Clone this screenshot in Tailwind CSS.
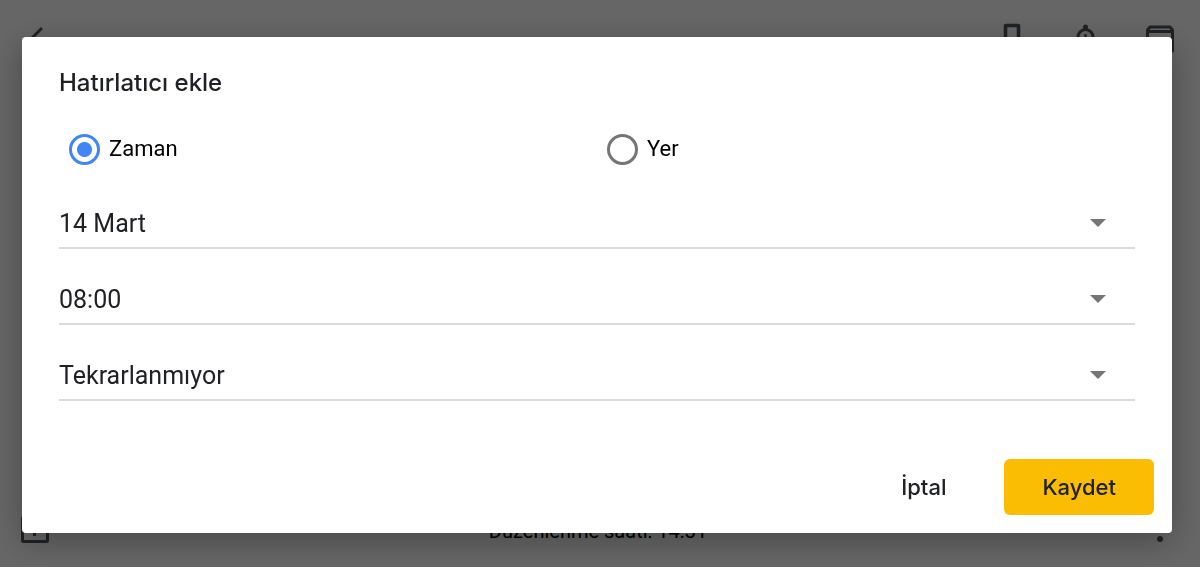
<!DOCTYPE html>
<html lang="tr">
<head>
  <meta charset="UTF-8">
  <meta name="viewport" content="width=device-width, initial-scale=1.0">
  <title>Hatırlatıcı ekle</title>
  <script src="https://cdn.jsdelivr.net/npm/@tailwindcss/browser@4"></script>
</head>
<body class="bg-white font-['Roboto',sans-serif] text-[#202124]">
  <!-- Note editor behind the dialog -->
  <div class="min-h-screen flex flex-col justify-between text-[#50545a]">
    <header class="flex items-center justify-between pt-5 pl-5 pr-6">
      <button type="button" aria-label="Geri">
        <svg class="w-9 h-9" viewBox="0 0 36 36" fill="none" stroke="currentColor" stroke-width="3">
          <path d="M22 8L7 23L18 34M7 23H34"/>
        </svg>
      </button>
      <div class="flex items-center gap-[37px]">
        <button type="button" aria-label="Sabitle">
          <svg class="w-9 h-9" viewBox="0 0 36 36" fill="none" stroke="currentColor" stroke-width="3.500" stroke-linejoin="round">
            <path d="M11.500 20V5.500H24.500V20L28.500 26H7.500ZM18 26V35"/>
          </svg>
        </button>
        <button type="button" aria-label="Hatırlatıcı">
          <svg class="w-9 h-9" viewBox="0 0 36 36" fill="none" stroke="currentColor" stroke-width="3">
            <path d="M11 28V17a7.500 7.500 0 0 1 15 0V28M7 28H30M18.500 18V24"/>
            <circle cx="18.500" cy="7" r="2.500" fill="currentColor" stroke="none"/>
            <circle cx="18.500" cy="15.500" r="1.500" fill="currentColor" stroke="none"/>
          </svg>
        </button>
        <button type="button" aria-label="Arşivle">
          <svg class="w-9 h-9" viewBox="0 0 36 36" fill="none" stroke="currentColor" stroke-width="3" stroke-linejoin="round">
            <path d="M7.500 31V10L10 7H30L32.500 10V31ZM8 11.500H32M20 20V26M15 21L20 26L25 21"/>
          </svg>
        </button>
      </div>
    </header>
    <footer class="flex items-center justify-between pl-5 pr-6 pb-5">
      <button type="button" aria-label="Ekle">
        <svg class="w-8 h-8" viewBox="0 0 32 32" fill="none" stroke="currentColor" stroke-width="3" stroke-linejoin="round">
          <rect x="2.500" y="2.500" width="25" height="24" rx="1"/>
          <path d="M14.500 7V21M8 14H21"/>
        </svg>
      </button>
      <p class="text-xl text-black">Düzenlenme saati: 14:31</p>
      <button type="button" aria-label="Diğer">
        <svg class="w-8 h-8" viewBox="0 0 32 32" fill="currentColor">
          <circle cx="16" cy="4" r="3"/>
          <circle cx="16" cy="14" r="3"/>
          <circle cx="16" cy="24" r="3"/>
        </svg>
      </button>
    </footer>
  </div>

  <!-- Dialog -->
  <div class="fixed inset-0 flex items-center bg-black/60 pl-[22px] pr-7 pt-[3px]">
    <form role="dialog" aria-labelledby="dialog-title" class="w-full rounded bg-white pt-7 pb-[18px] shadow-[0_8px_32px_rgba(0,0,0,0.3)]">
      <div class="px-[37px]">
        <h1 id="dialog-title" class="font-['Inter',sans-serif] text-2xl leading-9 font-medium">Hatırlatıcı ekle</h1>

        <div class="grid grid-cols-2 pt-8 text-[22px] leading-8 text-black">
          <label class="flex items-center gap-[9px] pl-[10px]">
            <input type="radio" name="type" value="time" checked class="appearance-none size-[31px] rounded-full border-3 border-[#757575] checked:border-[#4285f4] checked:bg-[radial-gradient(circle,#4285f4_7px,transparent_8px)]">
            Zaman
          </label>
          <label class="flex items-center gap-[9px] pl-[10px]">
            <input type="radio" name="type" value="place" class="appearance-none size-[31px] rounded-full border-3 border-[#757575] checked:border-[#4285f4] checked:bg-[radial-gradient(circle,#4285f4_7px,transparent_8px)]">
            Yer
          </label>
        </div>

        <div class="flex flex-col gap-6 pt-8 text-[25px]">
          <div class="relative">
            <select aria-label="Tarih" class="block w-full h-13 pt-1 appearance-none border-b-2 border-[#dcdcdc] bg-transparent">
              <option>14 Mart</option>
            </select>
            <svg class="absolute right-[29px] top-[22px] w-4 h-2 pointer-events-none" viewBox="0 0 16 8" fill="#757575"><path d="M0 0H16L8 8Z"/></svg>
          </div>
          <div class="relative">
            <select aria-label="Saat" class="block w-full h-13 pt-1 appearance-none border-b-2 border-[#dcdcdc] bg-transparent">
              <option>08:00</option>
            </select>
            <svg class="absolute right-[29px] top-[22px] w-4 h-2 pointer-events-none" viewBox="0 0 16 8" fill="#757575"><path d="M0 0H16L8 8Z"/></svg>
          </div>
          <div class="relative">
            <select aria-label="Tekrar" class="block w-full h-13 pt-1 appearance-none border-b-2 border-[#dcdcdc] bg-transparent">
              <option>Tekrarlanmıyor</option>
            </select>
            <svg class="absolute right-[29px] top-[22px] w-4 h-2 pointer-events-none" viewBox="0 0 16 8" fill="#757575"><path d="M0 0H16L8 8Z"/></svg>
          </div>
        </div>
      </div>

      <div class="flex justify-end gap-5 pt-[58px] pr-[18px] font-['Inter',sans-serif] text-[22px] font-medium">
        <button type="button" class="h-14 px-[38px] rounded-md">İptal</button>
        <button type="submit" class="h-14 px-[38px] rounded-md bg-[#fbbc04]">Kaydet</button>
      </div>
    </form>
  </div>
</body>
</html>
